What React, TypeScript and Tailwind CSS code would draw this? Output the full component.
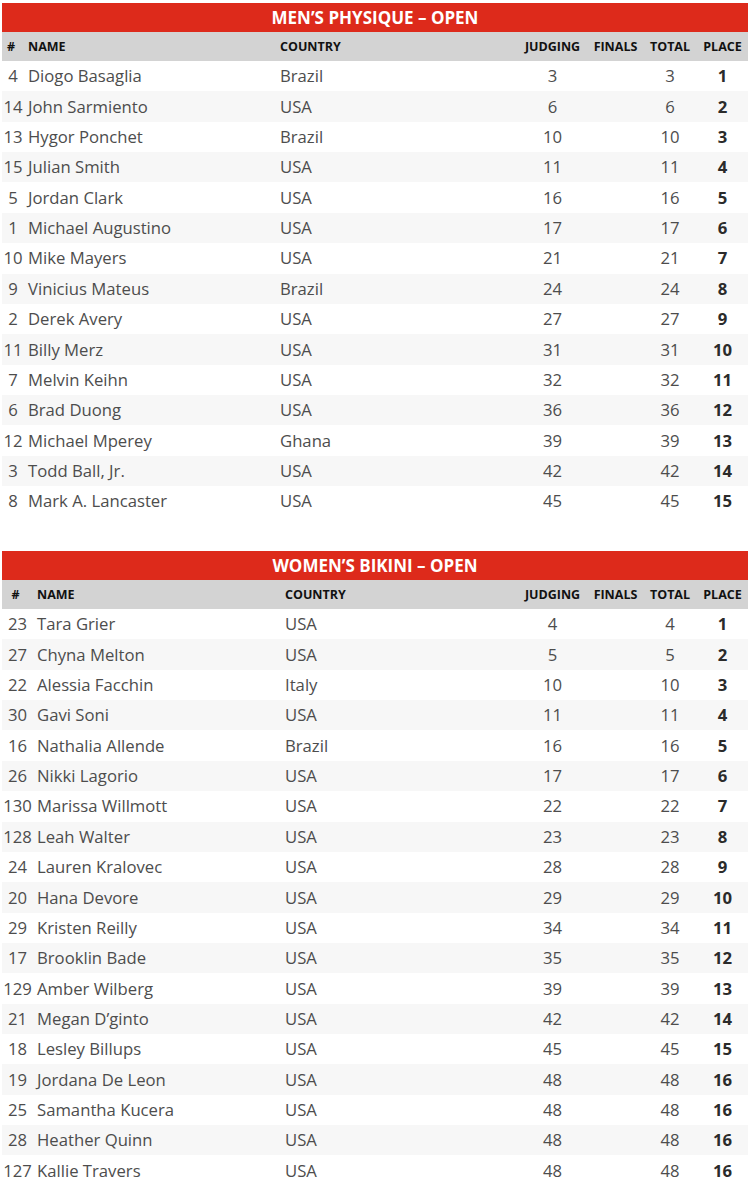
import React from "react";

type Row = [string, string, string, string, string, string];

const men: Row[] = [
  ["4", "Diogo Basaglia", "Brazil", "3", "3", "1"],
  ["14", "John Sarmiento", "USA", "6", "6", "2"],
  ["13", "Hygor Ponchet", "Brazil", "10", "10", "3"],
  ["15", "Julian Smith", "USA", "11", "11", "4"],
  ["5", "Jordan Clark", "USA", "16", "16", "5"],
  ["1", "Michael Augustino", "USA", "17", "17", "6"],
  ["10", "Mike Mayers", "USA", "21", "21", "7"],
  ["9", "Vinicius Mateus", "Brazil", "24", "24", "8"],
  ["2", "Derek Avery", "USA", "27", "27", "9"],
  ["11", "Billy Merz", "USA", "31", "31", "10"],
  ["7", "Melvin Keihn", "USA", "32", "32", "11"],
  ["6", "Brad Duong", "USA", "36", "36", "12"],
  ["12", "Michael Mperey", "Ghana", "39", "39", "13"],
  ["3", "Todd Ball, Jr.", "USA", "42", "42", "14"],
  ["8", "Mark A. Lancaster", "USA", "45", "45", "15"],
];

const women: Row[] = [
  ["23", "Tara Grier", "USA", "4", "4", "1"],
  ["27", "Chyna Melton", "USA", "5", "5", "2"],
  ["22", "Alessia Facchin", "Italy", "10", "10", "3"],
  ["30", "Gavi Soni", "USA", "11", "11", "4"],
  ["16", "Nathalia Allende", "Brazil", "16", "16", "5"],
  ["26", "Nikki Lagorio", "USA", "17", "17", "6"],
  ["130", "Marissa Willmott", "USA", "22", "22", "7"],
  ["128", "Leah Walter", "USA", "23", "23", "8"],
  ["24", "Lauren Kralovec", "USA", "28", "28", "9"],
  ["20", "Hana Devore", "USA", "29", "29", "10"],
  ["29", "Kristen Reilly", "USA", "34", "34", "11"],
  ["17", "Brooklin Bade", "USA", "35", "35", "12"],
  ["129", "Amber Wilberg", "USA", "39", "39", "13"],
  ["21", "Megan D\u2019ginto", "USA", "42", "42", "14"],
  ["18", "Lesley Billups", "USA", "45", "45", "15"],
  ["19", "Jordana De Leon", "USA", "48", "48", "16"],
  ["25", "Samantha Kucera", "USA", "48", "48", "16"],
  ["28", "Heather Quinn", "USA", "48", "48", "16"],
  ["127", "Kallie Travers", "USA", "48", "48", "16"],
];

type Cols = { num: string; name: string; country: string };

function Table({ title, rows, cols }: { title: string; rows: Row[]; cols: Cols }) {
  return (
    <div className="w-[746px] ml-[2px]">
      <div className="h-[29px] bg-[#dd2a1b] flex items-center justify-center text-white font-bold text-[17px] leading-none">
        {title}
      </div>
      <div className="h-[29px] bg-[#d3d3d3] flex items-center text-[12.5px] font-bold text-[#111111] uppercase leading-none pt-[1px]">
        <div className={`${cols.num} text-center pr-[4px]`}>#</div>
        <div className={`${cols.name} pl-[4px]`}>Name</div>
        <div className={`${cols.country} pl-[3px]`}>Country</div>
        <div className="w-[71px] text-center">Judging</div>
        <div className="w-[55px] text-center">Finals</div>
        <div className="w-[54px] text-center">Total</div>
        <div className="w-[51px] text-center">Place</div>
      </div>
      {rows.map((r, i) => (
        <div
          key={i}
          className={`h-[30.36px] flex items-center text-[16.7px] text-[#4d4d4d] leading-none pt-[1px] ${
            i % 2 === 1 ? "bg-[#f7f7f7]" : "bg-white"
          }`}
        >
          <div className={`${cols.num} text-center`}>{r[0]}</div>
          <div className={`${cols.name} pl-[4px] whitespace-nowrap`}>{r[1]}</div>
          <div className={`${cols.country} pl-[3px]`}>{r[2]}</div>
          <div className="w-[71px] text-center">{r[3]}</div>
          <div className="w-[55px] text-center"></div>
          <div className="w-[54px] text-center">{r[4]}</div>
          <div className="w-[51px] text-center font-bold text-[#2b2b2b]">{r[5]}</div>
        </div>
      ))}
    </div>
  );
}

export default function App() {
  return (
    <div
      className="w-[750px] h-[1202px] bg-white pt-[3px] overflow-hidden"
      style={{ fontFamily: '"Open Sans", "Noto Sans", "Liberation Sans", sans-serif' }}
    >
      <Table
        title={"MEN\u2019S PHYSIQUE \u2013 OPEN"}
        rows={men}
        cols={{ num: "w-[22px]", name: "w-[253px]", country: "w-[240px]" }}
      />
      <div className="h-[34.6px]" />
      <Table
        title={"WOMEN\u2019S BIKINI \u2013 OPEN"}
        rows={women}
        cols={{ num: "w-[31px]", name: "w-[249px]", country: "w-[235px]" }}
      />
    </div>
  );
}
